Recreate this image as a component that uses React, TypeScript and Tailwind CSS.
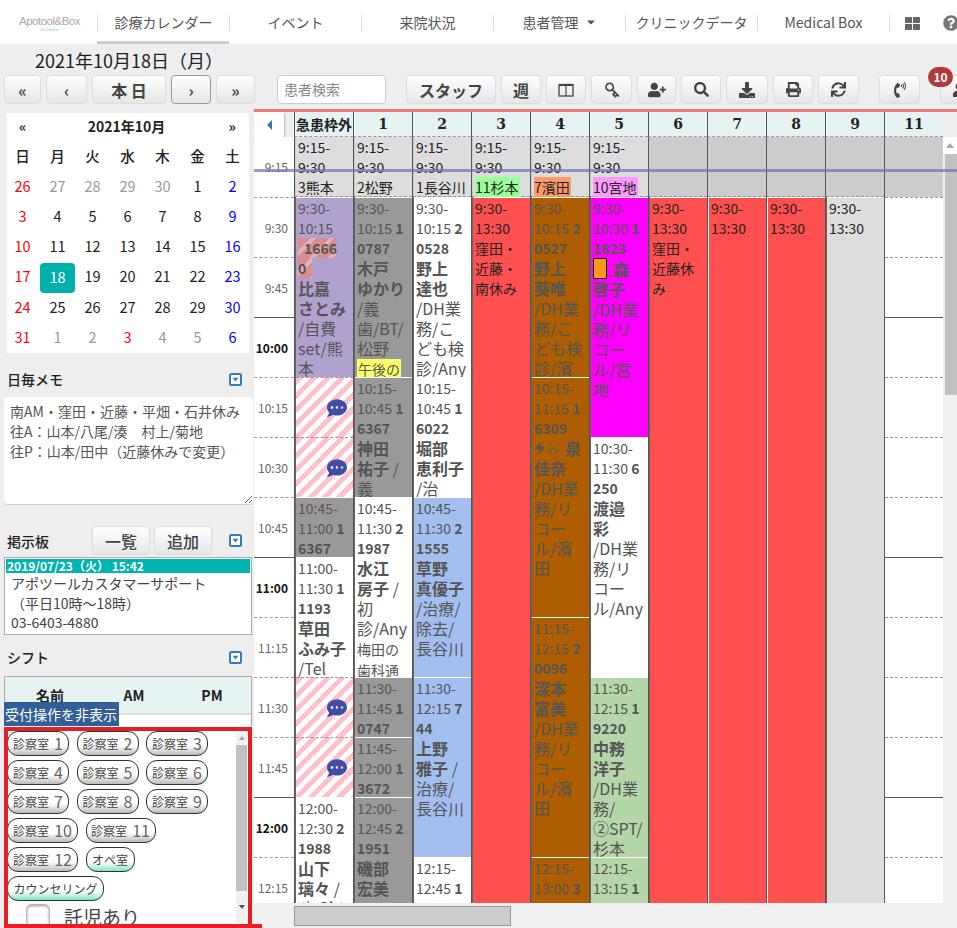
import React from "react";
import { Scissors, Zap } from "lucide-react";
import {
  FaCaretDown,
  FaCommentDots,
  FaDownload,
  FaPhoneVolume,
  FaPrint,
  FaQuestionCircle,
  FaSearch,
  FaSync,
  FaThLarge,
  FaUser,
  FaUserPlus,
} from "react-icons/fa";
import { FiKey } from "react-icons/fi";

type Slot = {
  slots: 1 | 2 | 3 | 4 | 16;
  bg?: string;
  hatch?: boolean;
  plain?: string[];
  start?: string;
  end?: string;
  room?: string;
  id?: React.ReactNode[];
  names?: React.ReactNode[];
  notes?: React.ReactNode[];
};

type Column = { head: string; first?: React.ReactNode[]; gap?: string; items: Slot[] };

const heights = { 1: "h-[60px]", 2: "h-[120px]", 3: "h-[180px]", 4: "h-[240px]", 16: "h-[960px]" };

const GREY = "bg-[#999]";
const WHITE = "bg-white";
const BROWN = "bg-[#ae5e00]";
const BLUE = "bg-[#a3bfef]";
const GREEN = "bg-[#b5d6a8]";
const RED = "bg-[#ff5050]";

const Sl = ({ n }: { n: string }) => (
  <>
    {n} <span className="font-normal">/</span>
  </>
);

const stripe =
  "bg-[repeating-linear-gradient(135deg,#dd8c8c_0,#dd8c8c_9px,#dcb4c0_9px,#dcb4c0_13px)]";

const DH_RIKO = ["/DH業", "務/リ", "コー"];

const columns: Column[] = [
  {
    head: "急患枠外",
    first: ["9:15-", "9:30", "3熊本"],
    items: [
      {
        slots: 3,
        bg: "bg-[#b1a1cf]",
        start: "9:30",
        end: "10:15",
        id: [
          <span className={`${stripe} inline-block w-[38px] pl-[6px]`}>1666</span>,
          <span className={`${stripe} inline-block w-[14px]`}>0</span>,
        ],
        names: ["比嘉", "さとみ"],
        notes: ["/自費", "set/熊", "本"],
      },
      { slots: 1, hatch: true },
      { slots: 1, hatch: true },
      { slots: 1, bg: GREY, start: "10:45", end: "11:00", room: "1", id: ["6367"] },
      {
        slots: 2,
        bg: WHITE,
        start: "11:00",
        end: "11:30",
        room: "1",
        id: ["1193"],
        names: ["草田", "ふみ子"],
        notes: ["/Tel"],
      },
      { slots: 1, hatch: true },
      { slots: 1, hatch: true },
      {
        slots: 3,
        bg: WHITE,
        start: "12:00",
        end: "12:30",
        room: "2",
        id: ["1988"],
        names: ["山下", <Sl n="璃々" />],
        notes: ["/初診/"],
      },
    ],
  },
  {
    head: "1",
    first: ["9:15-", "9:30", "2松野"],
    items: [
      {
        slots: 3,
        bg: GREY,
        start: "9:30",
        end: "10:15",
        room: "1",
        id: ["0787"],
        names: ["木戸", "ゆかり"],
        notes: ["/義", "歯/BT/", "松野", <span className="bg-[#ffff66] px-px text-sm">午後の</span>],
      },
      {
        slots: 2,
        bg: GREY,
        start: "10:15",
        end: "10:45",
        room: "1",
        id: ["6367"],
        names: ["神田", <Sl n="祐子" />],
        notes: ["義"],
      },
      {
        slots: 3,
        bg: WHITE,
        start: "10:45",
        end: "11:30",
        room: "2",
        id: ["1987"],
        names: ["水江", <Sl n="房子" />],
        notes: ["初", "診/Any", <span className="text-sm">梅田の</span>, <span className="text-sm">歯科通</span>],
      },
      { slots: 1, bg: GREY, start: "11:30", end: "11:45", room: "1", id: ["0747"] },
      { slots: 1, bg: GREY, start: "11:45", end: "12:00", room: "1", id: ["3672"] },
      {
        slots: 3,
        bg: GREY,
        start: "12:00",
        end: "12:45",
        room: "2",
        id: ["1951"],
        names: ["磯部", "宏美"],
      },
    ],
  },
  {
    head: "2",
    first: ["9:15-", "9:30", "1長谷川"],
    items: [
      {
        slots: 3,
        bg: WHITE,
        start: "9:30",
        end: "10:15",
        room: "2",
        id: ["0528"],
        names: ["野上", "達也"],
        notes: ["/DH業", "務/こ", "ども検", "診/Any"],
      },
      {
        slots: 2,
        bg: WHITE,
        start: "10:15",
        end: "10:45",
        room: "1",
        id: ["6022"],
        names: ["堀部", "恵利子"],
        notes: ["/治"],
      },
      {
        slots: 3,
        bg: BLUE,
        start: "10:45",
        end: "11:30",
        room: "2",
        id: ["1555"],
        names: ["草野", "真優子"],
        notes: ["/治療/", "除去/", "長谷川"],
      },
      {
        slots: 3,
        bg: BLUE,
        start: "11:30",
        end: "12:15",
        room: "7",
        id: ["44"],
        names: ["上野", <Sl n="雅子" />],
        notes: ["治療/", "長谷川"],
      },
      { slots: 3, bg: WHITE, start: "12:15", end: "12:45", room: "1" },
    ],
  },
  {
    head: "3",
    first: ["9:15-", "9:30", <span className="inline-block bg-[#99ff99] pr-px">11杉本</span>],
    items: [{ slots: 16, bg: RED, plain: ["9:30-", "13:30", "窪田・", "近藤・", "南休み"] }],
  },
  {
    head: "4",
    first: ["9:15-", "9:30", <span className="inline-block bg-[#ff9966] pr-px">7濱田</span>],
    items: [
      {
        slots: 3,
        bg: BROWN,
        start: "9:30",
        end: "10:15",
        room: "2",
        id: ["0527"],
        names: ["野上", "葵唯"],
        notes: ["/DH業", "務/こ", "ども検", "診/濱"],
      },
      {
        slots: 4,
        bg: BROWN,
        start: "10:15",
        end: "11:15",
        room: "1",
        id: ["6309"],
        names: [
          <span className="flex items-center">
            <Zap size={12} fill="#555" strokeWidth={1} />
            <Scissors size={14} strokeWidth={1.25} className="-rotate-90" />
            <span className="ml-[5px]">泉</span>
          </span>,
          "佳奈",
        ],
        notes: [...DH_RIKO, "ル/濱", "田"],
      },
      {
        slots: 4,
        bg: BROWN,
        start: "11:15",
        end: "12:15",
        room: "2",
        id: ["0096"],
        names: ["深本", "富美"],
        notes: [...DH_RIKO, "ル/濱", "田"],
      },
      { slots: 3, bg: BROWN, start: "12:15", end: "13:00", room: "3" },
    ],
  },
  {
    head: "5",
    first: ["9:15-", "9:30", <span className="inline-block bg-[#ff99ff] pr-px">10宮地</span>],
    items: [
      {
        slots: 4,
        bg: "bg-[#ff00ff]",
        start: "9:30",
        end: "10:30",
        room: "1",
        id: ["1823"],
        names: [
          <span className="flex items-center">
            <span className="inline-block h-[21px] w-[14px] border border-black bg-[#f7971e]" />
            <span className="ml-[6px]">森</span>
          </span>,
          "啓子",
        ],
        notes: [...DH_RIKO, "ル/宮", "地"],
      },
      {
        slots: 4,
        bg: WHITE,
        start: "10:30",
        end: "11:30",
        room: "6",
        id: ["250"],
        names: ["渡邉", "彩"],
        notes: [...DH_RIKO, "ル/Any"],
      },
      {
        slots: 3,
        bg: GREEN,
        start: "11:30",
        end: "12:15",
        room: "1",
        id: ["9220"],
        names: ["中務", "洋子"],
        notes: ["/DH業", "務/", "②SPT/", "杉本"],
      },
      { slots: 3, bg: GREEN, start: "12:15", end: "13:15", room: "1" },
    ],
  },
  {
    head: "6",
    items: [{ slots: 16, bg: RED, plain: ["9:30-", "13:30", "窪田・", "近藤休", "み"] }],
  },
  { head: "7", gap: "bg-white", items: [{ slots: 16, bg: RED, plain: ["9:30-", "13:30"] }] },
  { head: "8", gap: "bg-white", items: [{ slots: 16, bg: RED, plain: ["9:30-", "13:30"] }] },
  { head: "9", items: [{ slots: 16, bg: "bg-[#ddd]", plain: ["9:30-", "13:30"] }] },
];

const timeRows = [
  "9:30", "9:45", "10:00", "10:15", "10:30", "10:45", "11:00", "11:15", "11:30", "11:45", "12:00", "12:15",
];

function SlotCell({ s }: { s: Slot }) {
  if (s.hatch) {
    return (
      <div className="ml-px flex h-[60px] items-center justify-end border-t border-dashed border-[#999] bg-[repeating-linear-gradient(135deg,#ffc0cb_0,#ffc0cb_5px,#fff_5px,#fff_10px)] pr-[6px]">
        <FaCommentDots size={20} className="text-[#3f4fa8]" />
      </div>
    );
  }
  if (s.plain) {
    return (
      <div className={`${heights[s.slots]} ${s.bg} ml-px border-t border-white pl-[2px] text-sm leading-5 text-[#222]`}>
        {s.plain.map((l) => (
          <div key={l} className="whitespace-nowrap">{l}</div>
        ))}
      </div>
    );
  }
  return (
    <div className={`${heights[s.slots]} ${s.bg} ml-px overflow-hidden border-t border-white pl-[2px] leading-5 text-[#555]`}>
      <div className="text-sm">{s.start}-</div>
      <div className="text-sm">
        {s.end} <b>{s.room}</b>
      </div>
      {s.id?.map((x, i) => (
        <div key={i} className="text-sm font-bold">{x}</div>
      ))}
      {s.names?.map((x, i) => (
        <div key={i} className="whitespace-nowrap text-[16px] font-bold">{x}</div>
      ))}
      {s.notes?.map((x, i) => (
        <div key={i} className="whitespace-nowrap text-[16px]">{x}</div>
      ))}
    </div>
  );
}

function CollapseIcon() {
  return (
    <svg width="13" height="13" viewBox="0 0 13 13" className="shrink-0">
      <rect x="1" y="1" width="11" height="11" rx="1.5" fill="#fff" stroke="#337ab7" strokeWidth="2" />
      <path d="M3.6 4.8h5.8L6.5 8.4z" fill="#337ab7" />
    </svg>
  );
}

function SplitIcon() {
  return (
    <svg width="16" height="14" viewBox="0 0 16 14" fill="none" stroke="#444">
      <rect x="1" y="1.5" width="14" height="11.5" strokeWidth="1.3" />
      <path d="M1 2h14" strokeWidth="2" />
      <path d="M8 2v11" strokeWidth="1.2" />
    </svg>
  );
}

function ToolButton({ w, children, focus }: { w: string; children: React.ReactNode; focus?: boolean }) {
  return (
    <button
      className={`${w} ${focus ? "border-[#999]" : "border-[#ddd]"} flex h-[29px] shrink-0 items-center justify-center rounded-[4px] border bg-linear-to-b from-white to-[#e6e6e6] font-bold text-[#444]`}
    >
      {children}
    </button>
  );
}

function RoomButton({ w, label, n, teal }: { w: string; label: string; n?: string; teal?: boolean }) {
  return (
    <button
      className={`${w} ${teal ? "to-[#7fe3c8]" : "to-[#bbb]"} flex h-[25px] shrink-0 items-center justify-center rounded-[11px] border border-[#333] bg-linear-to-b from-white from-60% text-xs text-[#444]`}
    >
      {label}
      {n && <span className="ml-[5px] -mt-[2px] text-[16px] leading-none text-[#666]">{n}</span>}
    </button>
  );
}

const weeks = [
  ["26", "27", "28", "29", "30", "1", "2"],
  ["3", "4", "5", "6", "7", "8", "9"],
  ["10", "11", "12", "13", "14", "15", "16"],
  ["17", "18", "19", "20", "21", "22", "23"],
  ["24", "25", "26", "27", "28", "29", "30"],
  ["31", "1", "2", "3", "4", "5", "6"],
];

function dayColor(week: number, col: number, d: string) {
  if (col === 0) return "text-[#f00]";
  if (col === 6) return "text-[#00f]";
  if (week === 5 && d === "3") return "text-[#f00]";
  if ((week === 0 && col < 5) || week === 5) return "text-[#999]";
  return "text-[#222]";
}

function MiniCalendar() {
  return (
    <div className="ml-[7px] w-[242px] bg-white">
      <div className="flex h-[29px] items-center justify-between pb-[3px] pl-[12px] pr-[13px] text-sm font-bold text-[#222]">
        <span>«</span>
        <span className="mr-[2px]">2021年10月</span>
        <span>»</span>
      </div>
      <div className="-ml-[2px] grid h-[211px] grid-cols-[repeat(7,35px)] text-center text-[14.5px]">
        {["日", "月", "火", "水", "木", "金", "土"].map((d) => (
          <div key={d} className="flex h-[30px] items-center justify-center pb-[2px] font-medium text-[#222]">{d}</div>
        ))}
        {weeks.map((week, i) =>
          week.map((d, j) =>
            i === 3 && d === "18" ? (
              <div key={d} className="mt-px flex h-[30px] items-center justify-center rounded-[4px] bg-[#00b0ad] pb-[3px] text-white">{d}</div>
            ) : (
              <div key={`${i}-${j}`} className={`${dayColor(i, j, d)} flex h-[30px] items-center justify-center pb-[2px]`}>{d}</div>
            )
          )
        )}
      </div>
    </div>
  );
}

function Sidebar() {
  return (
    <aside className="relative flex w-[254px] shrink-0 flex-col pt-[4px]">
      <MiniCalendar />

      <div className="mt-[16px] flex h-5 items-center justify-between pl-[7px] pr-[12px] text-sm font-medium text-[#222]">
        日毎メモ
        <CollapseIcon />
      </div>
      <textarea
        readOnly
        className="ml-[4px] mt-[8px] h-[108px] w-[249px] resize-y rounded-[4px] border-b border-[#ccc] bg-white px-[6px] py-[4px] text-sm leading-5 text-[#555] outline-none"
        defaultValue={"南AM・窪田・近藤・平畑・石井休み\n往A：山本/八尾/湊　村上/菊地\n往P：山本/田中（近藤休みで変更）"}
      />

      <div className="mt-[21px] flex h-[29px] items-center pl-[7px] pr-[12px] text-sm font-medium text-[#222]">
        <span className="w-[85px]">掲示板</span>
        <ToolButton w="w-[58px]"><span className="text-base font-medium">一覧</span></ToolButton>
        <span className="w-[4px]" />
        <ToolButton w="w-[58px]"><span className="text-base font-medium">追加</span></ToolButton>
        <span className="flex-1" />
        <CollapseIcon />
      </div>
      <div className="ml-[4px] mt-[2px] h-[78px] w-[248px] border border-[#aaa] bg-white p-px text-sm leading-5 text-[#444]">
        <div className="h-[14px] bg-[#00b5ad] pl-px text-xs font-bold leading-[14px] text-white">2019/07/23（火） 15:42</div>
        <div className="pl-[5px] leading-[20px]">アポツールカスタマーサポート</div>
        <div className="pl-[5px] leading-[20px]">（平日10時～18時）</div>
        <div className="pl-[5px] leading-[19px]">03-6403-4880</div>
      </div>

      <div className="mt-[12px] flex h-5 items-center justify-between pl-[7px] pr-[12px] text-sm font-medium text-[#222]">
        シフト
        <CollapseIcon />
      </div>
      <div className="relative ml-[4px] mt-[9px] h-[50px] w-[248px] border-x border-t border-[#aaa] bg-white">
        <div className="grid h-[38px] grid-cols-[90px_78px_78px] items-center border-b-2 border-[#ddd] bg-[#e6f3f3] text-center text-sm font-bold text-[#222]">
          <span>名前</span>
          <span>AM</span>
          <span>PM</span>
        </div>
        <div className="absolute -left-px top-[25px] h-[24px] w-[115px] bg-[#325f96] pl-[1px] text-sm leading-6 text-white">受付操作を非表示</div>
      </div>

      <div className="relative ml-[4px] w-[246px] flex-1 overflow-hidden bg-white pl-[3px] pt-[5px]">
        <div className="flex flex-col gap-[4px]">
          <div className="flex gap-[7.5px]">
            <RoomButton w="w-[62px]" label="診察室" n="1" />
            <RoomButton w="w-[62px]" label="診察室" n="2" />
            <RoomButton w="w-[62px]" label="診察室" n="3" />
          </div>
          <div className="flex gap-[7.5px]">
            <RoomButton w="w-[62px]" label="診察室" n="4" />
            <RoomButton w="w-[62px]" label="診察室" n="5" />
            <RoomButton w="w-[62px]" label="診察室" n="6" />
          </div>
          <div className="flex gap-[7.5px]">
            <RoomButton w="w-[62px]" label="診察室" n="7" />
            <RoomButton w="w-[62px]" label="診察室" n="8" />
            <RoomButton w="w-[62px]" label="診察室" n="9" />
          </div>
          <div className="flex gap-[7.5px]">
            <RoomButton w="w-[71px]" label="診察室" n="10" />
            <RoomButton w="w-[70px]" label="診察室" n="11" />
          </div>
          <div className="flex gap-[7.5px]">
            <RoomButton w="w-[71px]" label="診察室" n="12" />
            <RoomButton w="w-[49px]" label="オペ室" teal />
          </div>
          <RoomButton w="w-[97px]" label="カウンセリング" teal />
        </div>
        <div className="ml-[19px] mt-[3px] flex items-start">
          <span className="h-[24px] w-[24px] shrink-0 rounded-[5px] border border-[#bbb] bg-white shadow-[inset_0_1px_3px_#999]" />
          <span className="ml-[14px] text-[19px] leading-[26px] text-[#444]">託児あり</span>
        </div>
        <div className="absolute right-[3px] top-[5px] flex h-[192px] w-[11px] flex-col bg-[#f1f1f1]">
          <div className="flex h-[14px] items-center justify-center">
            <span className="h-0 w-0 border-x-[3.5px] border-b-[4px] border-x-transparent border-b-[#aaa]" />
          </div>
          <div className="h-[146px] bg-[#c1c1c1]" />
          <div className="flex flex-1 items-center justify-center">
            <span className="h-0 w-0 border-x-[3.5px] border-t-[4px] border-x-transparent border-t-[#555]" />
          </div>
        </div>
      </div>
    </aside>
  );
}

function Schedule() {
  return (
    <section className="relative flex w-[703px] shrink-0 flex-col">
      <div className="h-[3px] bg-[#ee7777]" />
      <div className="flex h-[25px]">
        <div className="w-[40px] shrink-0">
          <div className="flex h-[26px] w-[30px] items-center justify-center rounded-br-[3px] bg-white shadow-[1px_1px_2px_#bbb]">
            <span className="h-0 w-0 border-y-[5px] border-r-[5px] border-y-transparent border-r-[#337ab7]" />
          </div>
        </div>
        {columns.concat({ head: "11", items: [] }).map((c) => (
          <div
            key={c.head}
            className={`${c.head === "急患枠外" ? "font-['Noto_Sans_CJK_JP',sans-serif] text-sm" : "font-['DejaVu_Serif',serif] text-[14px]"} flex h-[25px] w-[59px] shrink-0 items-center justify-center border-b border-l border-[#555] border-b-[#999] bg-[#e6f3f3] font-bold text-[#222] [border-bottom-style:dashed]`}
          >
            {c.head}
          </div>
        ))}
      </div>

      <div className="flex h-[766px] overflow-hidden bg-white">
        <div className="w-[40px] shrink-0">
          <div className="flex h-[60px] items-center justify-end pr-[6px] text-xs text-[#666]">9:15</div>
          {timeRows.map((t) => {
            const hour = t.endsWith(":00");
            return (
              <div
                key={t}
                className={`${hour ? "border-solid border-[#555] font-bold text-[#111]" : "border-dashed border-[#999] text-[#666]"} flex h-[60px] items-center justify-end border-t pr-[6px] text-xs`}
              >
                {t}
              </div>
            );
          })}
        </div>

        {columns.map((c) => (
          <div key={c.head} className={`${c.gap ?? "bg-[#666]"} w-[59px] shrink-0 border-l border-[#555]`}>
            <div className="h-[60px] border-b border-dashed border-[#999] bg-[#ccc]">
              {c.first && (
                <div className="ml-px h-full bg-[#ddd] pl-[2px] text-sm leading-5 text-[#222]">
                  {c.first.map((l, i) => (
                    <div key={i} className="whitespace-nowrap">{l}</div>
                  ))}
                </div>
              )}
            </div>
            {c.items.map((s, i) => (
              <SlotCell key={i} s={s} />
            ))}
          </div>
        ))}

        <div className="w-[59px] shrink-0 border-l border-[#555]">
          <div className="h-[60px] bg-[#ccc]" />
          {timeRows.map((t) => (
            <div
              key={t}
              className={`${t.endsWith(":00") ? "border-solid border-[#555]" : "border-dashed border-[#999]"} h-[60px] border-t`}
            />
          ))}
        </div>

        <div className="flex w-[14px] shrink-0 flex-col bg-[#f1f1f1]">
          <div className="flex h-[17px] items-center justify-center bg-white">
            <span className="h-0 w-0 border-x-[4px] border-b-[5px] border-x-transparent border-b-[#aaa]" />
          </div>
          <div className="ml-[2px] h-[241px] bg-[#c1c1c1]" />
        </div>
      </div>

      <div className="flex h-[25px] items-center bg-[#f0f0f0] pl-[40px]">
        <div className="h-[20px] w-[217px] border border-[#999] bg-[#ccc]" />
      </div>

      <div className="absolute inset-x-0 top-[60px] h-[3px] bg-[#7070b0]/70" />
    </section>
  );
}

export default function App() {
  return (
    <div className="relative flex h-[928px] w-[957px] flex-col overflow-hidden bg-[#eee] font-['Noto_Sans_CJK_JP',sans-serif]">
      <header className="flex h-[44px] shrink-0 items-start bg-white text-sm text-[#555]">
        <div className="flex h-[44px] w-[97px] shrink-0 flex-col items-center pl-[2px] pt-[17px] font-['Liberation_Sans',sans-serif] text-[#aaa]">
          <span className="text-[11.5px] leading-[9px] tracking-[-0.5px]">Apotool&amp;Box</span>
          <span className="mt-[2px] text-[4px] leading-[4px] text-[#7cc]">for Dentist</span>
        </div>
        {["診療カレンダー", "イベント", "来院状況", "患者管理", "クリニックデータ", "Medical Box"].map((n, i) => (
          <div key={n} className={`${i === 0 ? "border-b-[3px] border-b-[#c8d0d0]" : ""} flex h-[44px] w-[132px] shrink-0 items-start`}>
            <div className="mt-[15px] flex h-[16px] w-full items-center justify-center border-l border-[#ddd] pb-[2px]">
              {n}
              {n === "患者管理" && <FaCaretDown size={12} className="ml-[6px]" />}
            </div>
          </div>
        ))}
        <div className="mt-[15px] flex h-[16px] w-[68px] shrink-0 items-center border-l border-[#ddd] pl-[15px]">
          <FaThLarge size={15} className="shrink-0 text-[#666]" />
          <FaQuestionCircle size={16} className="ml-[23px] shrink-0 text-[#777]" />
        </div>
      </header>

      <div className="relative h-[65px] shrink-0 pl-[4px] pt-[6px]">
        <div className="h-5 pl-[31px] text-[18px] leading-5 text-[#222]">2021年10月18日（月）</div>
        <div className="mt-[5px] flex gap-[5px]">
          <ToolButton w="w-[37px]">«</ToolButton>
          <ToolButton w="w-[41px]">‹</ToolButton>
          <ToolButton w="w-[74px]"><span className="text-base">本 日</span></ToolButton>
          <ToolButton w="w-[40px]" focus>›</ToolButton>
          <ToolButton w="w-[39px]">»</ToolButton>
          <div className="ml-[17px] flex h-[29px] w-[109px] shrink-0 items-center rounded-[4px] border border-[#ccc] bg-white pl-[6px] pb-[2px] text-sm text-[#888]">患者検索</div>
          <span className="w-[10px] shrink-0" />
          <ToolButton w="w-[90px]"><span className="text-base">スタッフ</span></ToolButton>
          <ToolButton w="w-[40px]"><span className="text-base">週</span></ToolButton>
          <ToolButton w="w-[40px]"><SplitIcon /></ToolButton>
          <ToolButton w="w-[41px]"><FiKey size={16} strokeWidth={2.5} className="rotate-90" /></ToolButton>
          <ToolButton w="w-[39px]"><FaUserPlus size={18} /></ToolButton>
          <ToolButton w="w-[40px]"><FaSearch size={15} /></ToolButton>
          <ToolButton w="w-[42px]"><FaDownload size={16} /></ToolButton>
          <ToolButton w="w-[40px]"><FaPrint size={15} /></ToolButton>
          <ToolButton w="w-[41px]"><FaSync size={15} /></ToolButton>
          <span className="w-[10px] shrink-0" />
          <ToolButton w="w-[41px]"><FaPhoneVolume size={16} /></ToolButton>
          <span className="w-[10px] shrink-0" />
          <ToolButton w="w-[40px]"><FaUser size={14} className="mr-[3px]" /></ToolButton>
        </div>
        <span className="absolute left-[928px] top-[23px] flex h-[20px] w-[25px] items-center justify-center rounded-full bg-[#b03a3a] text-xs font-bold text-white">10</span>
      </div>

      <main className="flex min-h-0 flex-1">
        <Sidebar />
        <Schedule />
      </main>

      <div className="absolute left-[4px] top-[727px] h-[201px] w-[248px] border-x-4 border-t-4 border-[#e61e25]" />
      <div className="absolute left-[4px] top-[924px] h-[4px] w-[258px] bg-[#e61e25]" />
    </div>
  );
}
